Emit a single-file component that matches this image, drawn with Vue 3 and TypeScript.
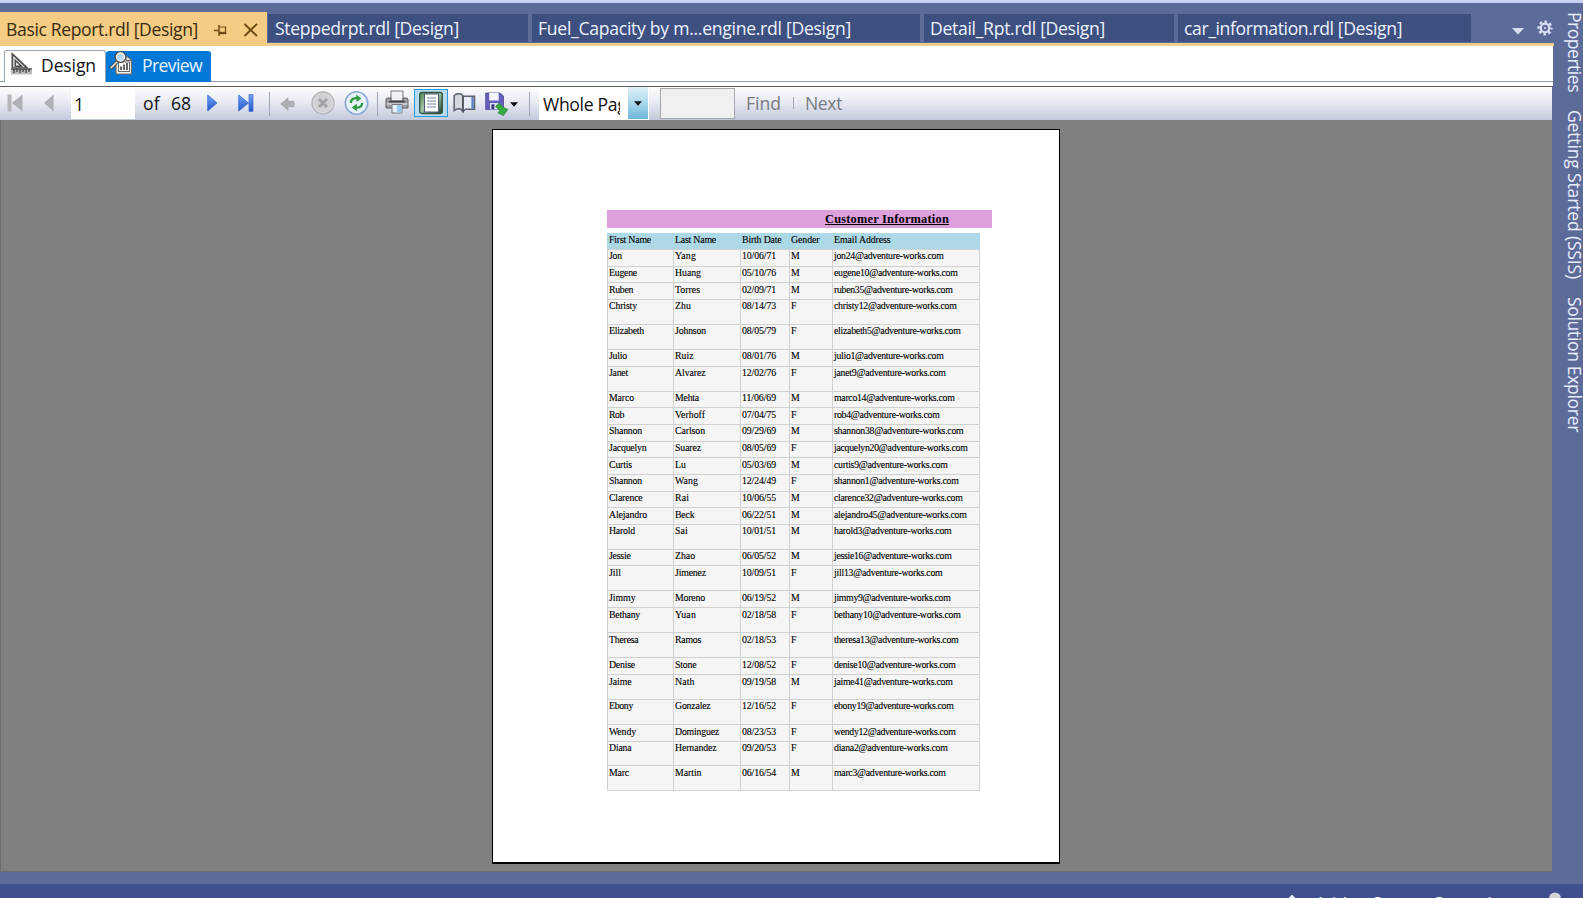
<script setup lang="ts">
type Cell = [string, number]

interface Customer {
  cells: Cell[]
  height: number
  lowered: boolean
}

// Spreads or tightens the letters so that a label fills the given width.
const vFit = {
  mounted(el: HTMLElement, binding: { value: number }) {
    const count = (el.textContent ?? '').length
    const vertical = el.classList.contains('side-label')
    const box = el.getBoundingClientRect()
    const size = vertical ? box.height : box.width
    if (count > 1) el.style.letterSpacing = `${(binding.value - size) / count}px`
  },
}

const loweredRows = new Set([
  'ruben35', 'rob4', 'curtis9', 'alejandro45', 'jill13', 'jimmy9',
  'bethany10', 'theresa13', 'denise10', 'jaime41', 'wendy12', 'marc3',
])

const person = (
  first: string, fw: number, last: string, lw: number,
  born: string, gender: string, mail: string, mw: number, height: number,
): Customer => ({
  height,
  lowered: loweredRows.has(mail),
  cells: [[first, fw], [last, lw], [born, 34], [gender, gender === 'M' ? 9 : 6], [`${mail}@adventure-works.com`, mw]],
})

const header: Cell[] = [['First Name', 42], ['Last Name', 41], ['Birth Date', 39.5], ['Gender', 28.5], ['Email Address', 56.5]]

const customers: Customer[] = [
  person('Jon', 13, 'Yang', 21, '10/06/71', 'M', 'jon24', 109.5, 17),
  person('Eugene', 28, 'Huang', 26, '05/10/76', 'M', 'eugene10', 123.5, 16),
  person('Ruben', 24, 'Torres', 25, '02/09/71', 'M', 'ruben35', 118.5, 17),
  person('Christy', 28, 'Zhu', 16, '08/14/73', 'F', 'christy12', 122.5, 25),
  person('Elizabeth', 35, 'Johnson', 31, '08/05/79', 'F', 'elizabeth5', 126.5, 25),
  person('Julio', 18, 'Ruiz', 18.5, '08/01/76', 'M', 'julio1', 109.5, 17),
  person('Janet', 19, 'Alvarez', 30.5, '12/02/76', 'F', 'janet9', 111.5, 25),
  person('Marco', 25, 'Mehta', 24, '11/06/69', 'M', 'marco14', 120.5, 16),
  person('Rob', 15, 'Verhoff', 30, '07/04/75', 'F', 'rob4', 105.5, 17),
  person('Shannon', 33, 'Carlson', 30, '09/29/69', 'M', 'shannon38', 129.5, 17),
  person('Jacquelyn', 37.5, 'Suarez', 26, '08/05/69', 'F', 'jacquelyn20', 133.5, 16),
  person('Curtis', 23, 'Lu', 11, '05/03/69', 'M', 'curtis9', 113.5, 17),
  person('Shannon', 33, 'Wang', 23, '12/24/49', 'F', 'shannon1', 124.5, 17),
  person('Clarence', 33.5, 'Rai', 14, '10/06/55', 'M', 'clarence32', 128.5, 16),
  person('Alejandro', 38, 'Beck', 19.5, '06/22/51', 'M', 'alejandro45', 132.5, 17),
  person('Harold', 26, 'Sai', 13, '10/01/51', 'M', 'harold3', 117.5, 25),
  person('Jessie', 21.5, 'Zhao', 20, '06/05/52', 'M', 'jessie16', 117.5, 16),
  person('Jill', 12, 'Jimenez', 31, '10/09/51', 'F', 'jill13', 108.5, 25),
  person('Jimmy', 26.5, 'Moreno', 30, '06/19/52', 'M', 'jimmy9', 116.5, 17),
  person('Bethany', 31, 'Yuan', 21, '02/18/58', 'F', 'bethany10', 126.5, 25),
  person('Theresa', 29.5, 'Ramos', 26, '02/18/53', 'F', 'theresa13', 124.5, 25),
  person('Denise', 26, 'Stone', 21.5, '12/08/52', 'F', 'denise10', 121.5, 17),
  person('Jaime', 22.5, 'Nath', 19.5, '09/19/58', 'M', 'jaime41', 118.5, 25),
  person('Ebony', 24, 'Gonzalez', 35.5, '12/16/52', 'F', 'ebony19', 119.5, 25),
  person('Wendy', 27, 'Dominguez', 44, '08/23/53', 'F', 'wendy12', 121.5, 17),
  person('Diana', 22.5, 'Hernandez', 41.5, '09/20/53', 'F', 'diana2', 113.5, 24),
  person('Marc', 20, 'Martin', 26.5, '06/16/54', 'M', 'marc3', 111.5, 25),
]

const documents = [
  { title: 'Steppedrpt.rdl [Design]', text: 184, width: 260 },
  { title: 'Fuel_Capacity by m...engine.rdl [Design]', text: 313, width: 388 },
  { title: 'Detail_Rpt.rdl [Design]', text: 175, width: 250 },
  { title: 'car_information.rdl [Design]', text: 218, width: 293 },
]

const sidePanels = [
  { title: 'Properties', length: 80 },
  { title: 'Getting Started (SSIS)', length: 169 },
  { title: 'Solution Explorer', length: 135 },
]
</script>

<template>
  <div class="ide">
    <div class="top-strip"></div>
    <div class="body">
      <main class="work">
        <nav class="tabs">
          <div class="tab active">
            <span v-fit="192">Basic Report.rdl [Design]</span>
            <svg class="pin" width="14" height="14" viewBox="0 0 14 14" fill="none" stroke="#6f4d12">
              <path d="M0 7.5H5" stroke-width="1.5" />
              <path d="M5 2V13" stroke-width="1.5" />
              <path d="M5 4H11.5V9.5" stroke-width="1.2" />
              <path d="M5 10H12.2" stroke-width="2.4" />
            </svg>
            <svg class="close" width="16" height="14" viewBox="0 0 16 14" fill="none" stroke="#6f4d12" stroke-width="2">
              <path d="M1.5 1L14 13M14 1L1.5 13" />
            </svg>
          </div>
          <div class="inactive-tabs">
            <div v-for="doc in documents" :key="doc.title" class="tab" :style="{ width: `${doc.width}px` }">
              <span v-fit="doc.text">{{ doc.title }}</span>
            </div>
          </div>
          <svg class="tab-menu" width="12" height="7" viewBox="0 0 12 7"><path d="M0 0H12L6 6.5Z" fill="#d9e0f8" /></svg>
          <svg class="gear" width="16" height="16" viewBox="0 0 16 16" fill="none" stroke="#d9e0f8">
            <circle cx="8" cy="8" r="4.3" stroke-width="2.3" />
            <circle cx="8" cy="8" r="6.4" stroke-width="2.4" stroke-dasharray="2.6 2.426" stroke-dashoffset="1.3" />
            <circle cx="8" cy="8" r="1.1" fill="#d9e0f8" stroke="none" />
          </svg>
        </nav>

        <div class="views">
          <div class="view design">
            <svg width="24" height="24" viewBox="0 0 24 24">
              <path d="M2.5 1L20 17.5H2.5Z" fill="#505050" />
              <path d="M4.2 5L16 16.2H4.2Z" fill="#e4e4e4" />
              <path d="M6.3 9.4L12.3 15.2H6.3Z" fill="#fff" stroke="#505050" stroke-width="1.5" />
              <rect x="2" y="17.5" width="21" height="6" fill="#bdbdbd" />
              <path d="M2 18H23" stroke="#3d3d3d" stroke-width="1.2" />
              <path d="M5 18V22M8 18V21M11 18V22M14 18V21M17 18V22M20 18V21" stroke="#3d3d3d" stroke-width="1.3" />
            </svg>
            <span v-fit="55">Design</span>
          </div>
          <div class="view preview">
            <svg width="24" height="24" viewBox="0 0 24 24">
              <path d="M7 5H17L22.5 9V23H7Z" fill="#f7f4ef" stroke="#706a66" stroke-width="1.2" />
              <path d="M17 5V9.5H22" fill="#ddd" stroke="#706a66" />
              <rect x="9.5" y="11" width="11" height="9.5" fill="#fff" stroke="#666" />
              <path d="M12 19V15.5M15 19V13.5M18 19V12" stroke="#3e3e3e" stroke-width="1.6" />
              <path d="M8.5 10.5L1.5 17.5" stroke="#4d4d4d" stroke-width="3.6" />
              <path d="M8.5 10.5L1.8 17" stroke="#ece9e4" stroke-width="1.7" />
              <circle cx="11.5" cy="6" r="5" fill="#b9d9f4" stroke="#4d4d4d" stroke-width="2" />
              <circle cx="11.5" cy="6" r="4.1" fill="none" stroke="#fff" stroke-width="1.2" />
            </svg>
            <span v-fit="60">Preview</span>
          </div>
        </div>

        <div class="toolbar">
          <svg class="tool first" width="16" height="18" viewBox="0 0 16 18">
            <rect x="0.5" y="0.5" width="4" height="17" fill="#b5b6ba" /><path d="M15.5 0.5V17.5L5 9Z" fill="#b0b1b6" />
          </svg>
          <svg class="tool prev" width="10" height="18" viewBox="0 0 10 18"><path d="M9.6 0.5V17.5L0 9Z" fill="#b0b1b6" /></svg>
          <div class="page-number">1</div>
          <span class="label of" v-fit="17">of</span>
          <span class="label total" v-fit="20">68</span>
          <svg class="tool next" width="11" height="18" viewBox="0 0 11 18">
            <defs><linearGradient id="blue" x1="0" y1="0" x2="0" y2="1"><stop offset="0" stop-color="#72a5f5" /><stop offset="1" stop-color="#2456cc" /></linearGradient></defs>
            <path d="M0.7 1V17L10 9Z" fill="url(#blue)" stroke="#3969d2" stroke-width="0.8" />
          </svg>
          <svg class="tool last" width="16" height="18" viewBox="0 0 16 18">
            <path d="M0.7 1V17L10.5 9Z" fill="url(#blue)" stroke="#3969d2" stroke-width="0.8" />
            <rect x="11" y="0.7" width="4" height="16.6" fill="url(#blue)" stroke="#3969d2" stroke-width="0.7" />
          </svg>
          <i class="sep s1"></i>
          <svg class="tool back" width="15" height="14" viewBox="0 0 15 14"><path d="M0.7 7L8 0.8V4.3H14V9.7H8V13.2Z" fill="#adafb2" stroke="#9fa2a8" stroke-width="0.7" /></svg>
          <svg class="tool stop" width="24" height="24" viewBox="0 0 24 24">
            <circle cx="12" cy="12" r="11" fill="#d9dade" stroke="#b7b8bc" stroke-width="1.4" />
            <circle cx="12" cy="12" r="8.8" fill="#d0d1d4" />
            <path d="M8 8L16 16M16 8L8 16" stroke="#a2a3a6" stroke-width="3" />
          </svg>
          <svg class="tool refresh" width="25" height="24" viewBox="0 0 25 24">
            <circle cx="12.5" cy="12" r="11.2" fill="#e8f2fc" stroke="#8cacd6" stroke-width="1.6" />
            <path d="M6.8 12Q7 7.4 12 7.2H13" fill="none" stroke="#2c9b3c" stroke-width="2.3" />
            <path d="M12.2 3.6L17.4 7.4L12.6 11Z" fill="#2c9b3c" />
            <path d="M18.2 12Q18 16.4 13.5 16.6H12" fill="none" stroke="#2c9b3c" stroke-width="2.3" />
            <path d="M12.8 12.8L7.8 16.6L12.8 20.2Z" fill="#2c9b3c" />
          </svg>
          <i class="sep s2"></i>
          <svg class="tool printer" width="24" height="24" viewBox="0 0 24 24">
            <path d="M6 1H18V11H6Z" fill="#f0f1f4" stroke="#777a80" />
            <path d="M1 9.5Q1 8 3 8H6V11H18V8H21Q23 8 23 9.5V18H1Z" fill="#9b9da2" stroke="#5d5f64" />
            <path d="M4 11.7H20" stroke="#3f4248" stroke-width="1.5" />
            <path d="M1.5 14H22.5" stroke="#dcdcdc" stroke-width="1.3" />
            <path d="M7 14.5H17V23H7Z" fill="#e7f2fd" stroke="#777a80" />
            <path d="M12 15H16.5V22.5H12Z" fill="#98c9f0" />
          </svg>
          <div class="toggle">
            <svg width="24" height="24" viewBox="0 0 24 24">
              <defs><linearGradient id="green" x1="0" y1="0" x2="1" y2="1"><stop offset="0" stop-color="#4e8757" /><stop offset="0.45" stop-color="#a8c6a8" /><stop offset="1" stop-color="#1b4427" /></linearGradient></defs>
              <rect x="0.7" y="1.5" width="22.6" height="21" rx="2" fill="url(#green)" stroke="#31553b" stroke-width="1.3" />
              <rect x="5.5" y="3" width="14" height="18" fill="#fff" stroke="#4d5870" />
              <path d="M8 7H17M8 10H17M8 13H17M8 16H17" stroke="#7184a8" stroke-width="1.2" />
            </svg>
          </div>
          <svg class="tool book" width="23" height="20" viewBox="0 0 23 20">
            <path d="M1.2 2.5Q4 0 8 1L10 3V18.5L7.5 16Q4 15 1.2 17.5Z" fill="#d5d8df" stroke="#5d6370" stroke-width="1.5" />
            <path d="M10 3.3H21.5V16.3H12.5L10 18.5Z" fill="#e6edf8" stroke="#5d6370" stroke-width="1.5" />
            <path d="M19.6 4V16" stroke="#5e83c4" stroke-width="2.4" />
            <path d="M10 3V18.5" stroke="#4a4e58" stroke-width="1.3" />
          </svg>
          <svg class="tool save" width="24" height="24" viewBox="0 0 24 24">
            <path d="M0.7 1H15L18.5 4V17.5H0.7Z" fill="#655dbc" stroke="#4c479c" stroke-width="0.8" />
            <rect x="4.2" y="1" width="9.5" height="7.5" fill="#f4f6fd" />
            <rect x="5" y="11" width="9" height="6.5" fill="#dadff5" /><rect x="6.5" y="12.3" width="2.8" height="5" fill="#39367d" />
            <path d="M10.5 14.5L13.8 11.2L18 15L22.8 17.5L18.5 23.5L13 21L14.5 18.5Z" fill="#36aa42" stroke="#26853a" stroke-width="0.7" />
          </svg>
          <svg class="tool caret" width="8" height="5" viewBox="0 0 8 5"><path d="M0 0.3H8L4 4.8Z" fill="#111" /></svg>
          <i class="sep s3"></i>
          <div class="zoom">
            <div class="zoom-value"><span v-fit="93">Whole Page</span></div>
            <div class="zoom-arrow"><svg width="8" height="5" viewBox="0 0 8 5"><path d="M0 0.3H8L4 4.8Z" fill="#111" /></svg></div>
          </div>
          <div class="find-box"></div>
          <span class="label muted find" v-fit="35">Find</span>
          <i class="sep small"></i>
          <span class="label muted nextfind" v-fit="37">Next</span>
        </div>

        <div class="canvas">
          <article class="page">
            <h1><span v-fit="124">Customer Information</span></h1>
            <div class="report">
              <div class="row head">
                <div v-for="cell in header" :key="cell[0]" class="cell"><span v-fit="cell[1]">{{ cell[0] }}</span></div>
              </div>
              <div v-for="(c, i) in customers" :key="i" class="row" :class="{ lowered: c.lowered }" :style="{ height: `${c.height}px` }">
                <div v-for="(cell, j) in c.cells" :key="j" class="cell"><span v-fit="cell[1]">{{ cell[0] }}</span></div>
              </div>
            </div>
          </article>
        </div>
      </main>

      <aside class="side">
        <span v-for="p in sidePanels" :key="p.title" v-fit="p.length" class="side-label">{{ p.title }}</span>
      </aside>
    </div>

    <footer class="status">
      <svg width="12" height="12" viewBox="0 0 12 12"><path d="M6 1V12M1.5 5.5L6 1L10.5 5.5" fill="none" stroke="#e6e9f5" stroke-width="2" /></svg>
      <span v-fit="177">Add to Source Control</span>
      <svg class="bell" width="14" height="14" viewBox="0 0 14 14"><circle cx="7" cy="6.5" r="6" fill="#d4d4d8" /></svg>
    </footer>
  </div>
</template>

<style>
html, body { margin: 0; overflow: hidden; }
</style>

<style scoped>
.ide {
  width: 1583px;
  height: 898px;
  overflow: hidden;
  display: flex;
  flex-direction: column;
  background: #5d6b99;
  font: 17.6px/24px "Open Sans", "Noto Sans", sans-serif;
  color: #111;
}
.ide * { box-sizing: border-box; }
svg { display: block; flex: none; }
span { white-space: pre; }
.top-strip { height: 3px; flex: none; background: #c6d2f0; }
.body { height: 881px; flex: none; display: flex; }
.work { width: 1554px; flex: none; }

.tabs { height: 43px; display: flex; align-items: flex-start; border-bottom: 3px solid #f2ce8c; }
.tab { flex: none; height: 28px; padding: 2px 0 0 6px; overflow: hidden; background: #3d5080; color: #edf2ff; }
.tab:first-child { padding-left: 7px; }
.tab.active {
  width: 267px;
  height: 34px;
  margin-top: 9px;
  padding: 5px 0 0 6px;
  display: flex;
  background: #f5cc84;
  color: #3a2b10;
}
.inactive-tabs { display: flex; gap: 4px; margin: 11px 0 0 1px; }
.pin { margin: 6px 0 0 16px; }
.close { margin: 6px 0 0 15px; }
.tab-menu { margin: 25px 0 0 41px; }
.gear { margin: 17px 0 0 13px; }

.views { height: 40px; display: flex; padding: 4px 0 0 4px; width: 1553px;
  background: linear-gradient(#8b9ab2, #8b9ab2) 0 35px / 100% 1px no-repeat #fff; }
.view { display: flex; height: 32px; border-radius: 3px 3px 0 0; }
.design { width: 102px; height: 32px; background: #fff; border: 1px solid #9aa5b8; border-bottom: 0; padding: 0 0 0 4px; }
.design span { margin: 2px 0 0 8px; }
.preview { width: 105px; margin-top: 1px; height: 31px; background: #0078d7; color: #eaf4ff; padding-left: 3px; }
.preview span { margin: 2px 0 0 9px; }

.toolbar {
  width: 1552px;
  height: 34px;
  display: flex;
  align-items: flex-start;
  border-top: 1px solid #5b5d59;
  background: linear-gradient(#fdfdfe, #e9ebf3 45%, #c3c9dc);
}
.tool { margin-top: 7px; }
.label { margin-top: 4px; flex: none; }
.muted { color: #777a80; }
.first { margin-left: 7px; }
.prev { margin-left: 21px; }
.page-number { width: 64px; height: 32px; margin: 0 0 0 17px; padding: 5px 0 0 3px; background: #fff; }
.of { margin-left: 8px; }
.total { margin-left: 11px; }
.next { margin-left: 16px; }
.last { margin-left: 20px; }
.sep { flex: none; width: 1px; height: 24px; margin-top: 5px; background: #a0a5b5; }
.s1 { margin-left: 15px; }
.back { margin: 10px 0 0 10px; }
.stop { margin: 4px 0 0 16px; }
.refresh { margin: 4px 0 0 9px; }
.s2 { margin-left: 8px; }
.printer { margin: 3px 0 0 7px; }
.toggle { flex: none; width: 34px; height: 28px; margin: 2px 0 0 5px; padding: 1px 0 0 4px; border: 1px solid #2e98dc; background: #b7dcf3; }
.book { margin: 6px 0 0 5px; }
.save { margin: 5px 0 0 9px; }
.caret { margin: 15px 0 0 1px; }
.s3 { margin-left: 11px; }
.zoom { display: flex; flex: none; width: 110px; height: 33px; margin-left: 9px; background: #fff; }
.zoom-value { width: 81px; padding: 5px 0 0 4px; overflow: hidden; }
.zoom-arrow { width: 20px; height: 32px; margin-left: 8px; padding: 14px 0 0 6px; background: linear-gradient(#e0f0f8, #a9d7ec 50%, #6fb6d8); }
.find-box { flex: none; width: 75px; height: 31px; margin: 1px 0 0 11px; border: 1px solid #a5a7aa; background: #f0f0f0; }
.find { margin-left: 11px; }
.small { height: 12px; margin: 10px 0 0 12px; }
.nextfind { margin-left: 11px; }

.canvas {
  width: 1552px;
  height: 752px;
  padding: 9px 0 0 491px;
  border: solid #6b6d72;
  border-width: 0 0 1px 1px;
  background: #808080;
}
.page {
  width: 568px;
  height: 735px;
  padding: 80px 0 0 114px;
  border: 1px solid #000;
  border-bottom-width: 2px;
  background: #fff;
  font-family: "Liberation Serif", serif;
  color: #000;
}
h1 {
  width: 385px;
  height: 18px;
  margin: 0 0 5px;
  padding-left: 218px;
  background: #dda0dd;
  font: bold 12.4px/18px "Liberation Serif", serif;
  text-decoration: underline;
}
.report { width: 373px; font-size: 9.8px; line-height: 11px; border-bottom: 1px solid #d0d0d0; -webkit-text-stroke: 0.12px #000; }
.row { display: grid; grid-template-columns: 66px 67px 49px 43px 148px; background: #f5f5f5; }
.row.head { height: 16px; background: #add8e6; }
.cell { padding: 0 0 0 1px; border-left: 1px solid #d0d0d0; border-top: 1px solid #d0d0d0; }
.cell:last-child { border-right: 1px solid #d0d0d0; }
.lowered .cell { padding-top: 1px; }
.head .cell { border-color: #add8e6; }

.side { width: 29px; display: flex; flex-direction: column; align-items: flex-start; gap: 18px; padding: 9px 0 0 11px; color: #e8edfc; }
.side-label { writing-mode: vertical-rl; line-height: 20px; flex: none; }

.status { height: 14px; flex: none; display: flex; align-items: flex-start; background: #40508d; color: #fff; overflow: hidden; }
.status svg { margin: 11px 0 0 1286px; }
.status span { margin: 7px 0 0 17px; flex: none; font-size: 17px; }
.status .bell { margin: 8px 0 0 56px; }
</style>
